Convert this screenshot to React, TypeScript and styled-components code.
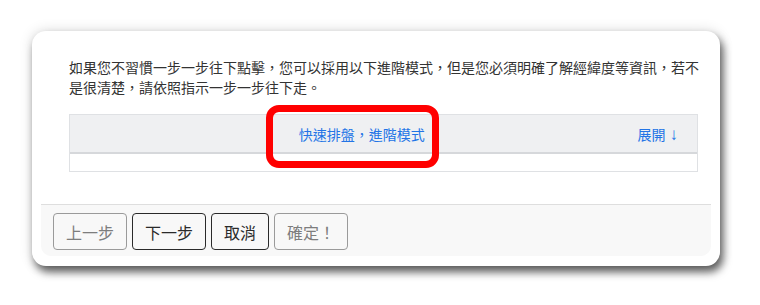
import React from "react";
import styled, { createGlobalStyle } from "styled-components";

const GlobalStyle = createGlobalStyle`
  html, body { margin: 0; padding: 0; background: #ffffff; }
  body { font-family: "Noto Sans CJK TC", "Noto Sans", sans-serif; }
  * { box-sizing: border-box; }
`;

const Page = styled.div`
  padding: 31px 40px 0 32px;
  width: 760px;
  height: 305px;
  overflow: hidden;
`;

const Card = styled.div`
  width: 688px;
  height: 235px;
  background: #ffffff;
  border-radius: 14px;
  padding: 9px 9px 10px;
  display: flex;
  flex-direction: column;
  box-shadow: 3px 6px 9px rgba(0, 0, 0, 0.62), 0 0 14px rgba(0, 0, 0, 0.14);
`;

const Body = styled.div`
  flex: 1;
  padding: 17px 13px 0 28px;
`;

const Intro = styled.p`
  margin: 0 -4px 0 0;
  font-size: 14px;
  line-height: 20px;
  color: #333333;
`;

const Panel = styled.div`
  position: relative;
  margin-top: 17px;
  border: 1px solid #dfe1e4;
`;

const PanelHeader = styled.div`
  display: grid;
  grid-template-columns: 1fr auto;
  align-items: center;
  height: 39px;
  padding: 0 19px 0 16px;
  background: #eff0f2;
  border-bottom: 2px solid #d6d8db;
`;

const Link = styled.span<{ $center?: boolean }>`
  color: #2274e6;
  font-size: 14px;
  line-height: 20px;
  text-align: ${(p) => (p.$center ? "center" : "right")};
`;

const Arrow = styled.span`
  font-family: "Liberation Sans", "DejaVu Sans", sans-serif;
  font-size: 17px;
  line-height: 1;
  margin-left: 4px;
`;

const PanelBody = styled.div`
  height: 17px;
  background: #ffffff;
`;

const Highlight = styled.div`
  position: absolute;
  left: 196px;
  top: -10px;
  width: 173px;
  height: 63px;
  border: 7px solid #ff0000;
  border-radius: 13px;
  pointer-events: none;
`;

const Footer = styled.div`
  display: flex;
  gap: 5px;
  padding: 8px 12px 6px;
  background: #f8f8f8;
  border-top: 1px solid #dedede;
  border-radius: 0 0 10px 10px;
`;

const Button = styled.button<{ $disabled?: boolean }>`
  height: 37px;
  padding: 0 12px;
  font-family: "Noto Sans CJK TC", "Noto Sans", sans-serif;
  font-size: 16px;
  line-height: 24px;
  background: transparent;
  border-radius: 4px;
  border: 1px solid ${(p) => (p.$disabled ? "#9a9a9a" : "#2a2a2a")};
  color: ${(p) => (p.$disabled ? "#7d7d7d" : "#2a2a2a")};
  cursor: ${(p) => (p.$disabled ? "default" : "pointer")};
`;

export default function App() {
  return (
    <>
      <GlobalStyle />
      <Page>
        <Card>
          <Body>
            <Intro>
              如果您不習慣一步一步往下點擊，您可以採用以下進階模式，但是您必須明確了解經緯度等資訊，若不是很清楚，請依照指示一步一步往下走。
            </Intro>
            <Panel>
              <PanelHeader>
                <Link $center>快速排盤，進階模式</Link>
                <Link>
                  展開<Arrow>↓</Arrow>
                </Link>
              </PanelHeader>
              <PanelBody />
              <Highlight />
            </Panel>
          </Body>
          <Footer>
            <Button $disabled>上一步</Button>
            <Button>下一步</Button>
            <Button>取消</Button>
            <Button $disabled>確定！</Button>
          </Footer>
        </Card>
      </Page>
    </>
  );
}
